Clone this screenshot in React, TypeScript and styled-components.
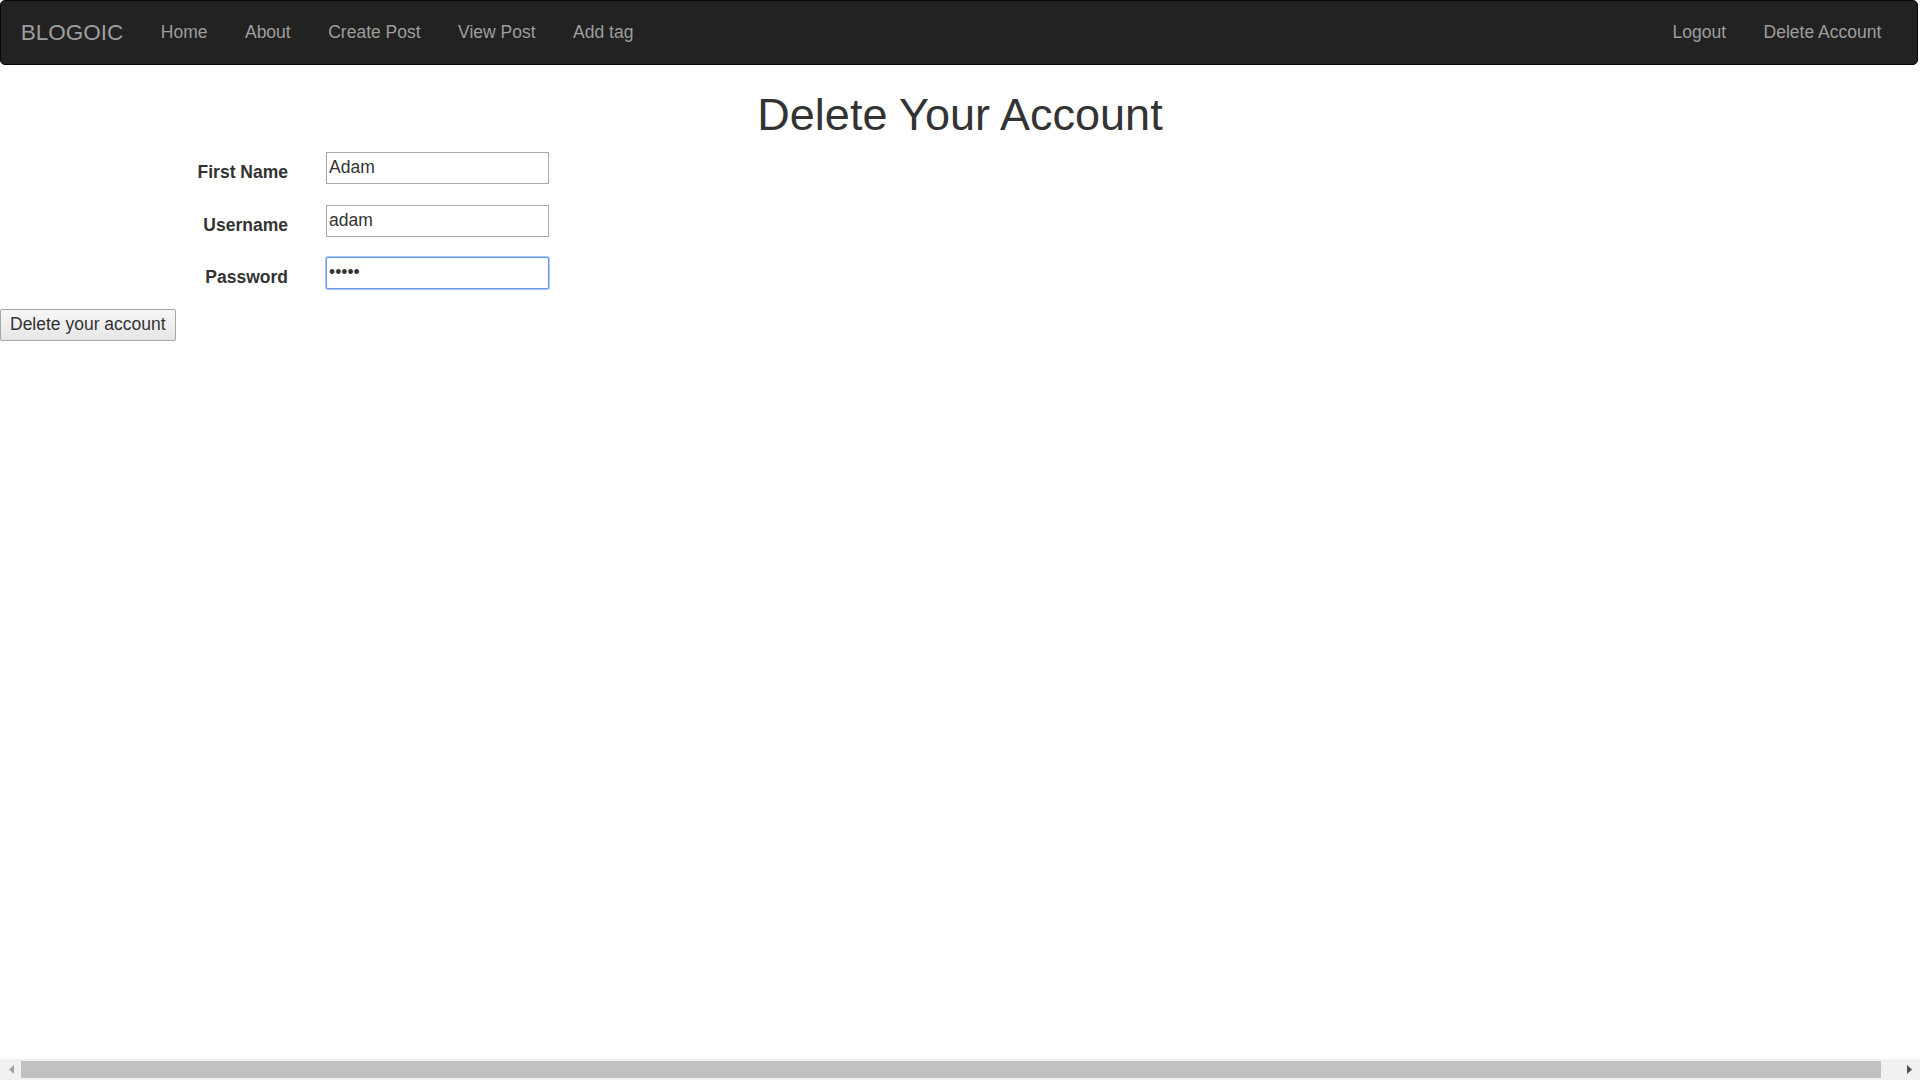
import React from "react";
import styled, { createGlobalStyle } from "styled-components";

const GlobalStyle = createGlobalStyle`
  html, body {
    margin: 0;
    padding: 0;
    height: 100%;
    overflow: hidden;
    background: #ffffff;
  }
  body {
    font-family: "Liberation Sans", Arial, Helvetica, sans-serif;
    font-size: 17.5px;
    line-height: 25px;
    color: #333333;
  }
  * { box-sizing: border-box; }
`;

const Shell = styled.div`
  display: flex;
  flex-direction: column;
  height: 100vh;
`;

const Navbar = styled.nav`
  display: flex;
  justify-content: space-between;
  align-items: flex-start;
  height: 65px;
  margin-right: 2px;
  padding: 0 0 0 1px;
  background: #222222;
  border: 1px solid #080808;
  border-radius: 5px;
`;

const NavGroup = styled.div<{ $right?: boolean }>`
  display: flex;
  align-items: flex-start;
  padding-right: ${(p) => (p.$right ? "17px" : "0")};
`;

const Brand = styled.a`
  display: block;
  padding: 18.75px 18.75px;
  height: 62px;
  font-size: 22.5px;
  line-height: 25px;
  color: #9d9d9d;
  text-decoration: none;
`;

const NavLink = styled.a`
  display: block;
  padding: 18.75px 18.75px;
  font-size: 17.5px;
  line-height: 25px;
  color: #9d9d9d;
  text-decoration: none;
`;

const Main = styled.main`
  flex: 1;
`;

const Title = styled.h1`
  margin: 25px 0 11px;
  text-align: center;
  font-size: 45px;
  font-weight: 500;
  line-height: 49px;
  color: #333333;
`;

const FormGrid = styled.form`
  display: grid;
  grid-template-columns: 288px 223px;
  grid-auto-rows: 32px;
  column-gap: 38px;
  row-gap: 20.5px;
  padding-top: 2px;
`;

const Label = styled.label`
  display: flex;
  justify-content: flex-end;
  padding-top: 10px;
  font-weight: bold;
  font-size: 17.5px;
  line-height: 20px;
  color: #333333;
`;

const Field = styled.input<{ $active?: boolean }>`
  width: 223px;
  height: 32px;
  margin: 0;
  padding: 0 2px 1px;
  font-family: "Liberation Sans", Arial, Helvetica, sans-serif;
  font-size: 17.5px;
  color: #333333;
  background: #ffffff;
  border: 1px solid ${(p) => (p.$active ? "#6a9ae8" : "#a9a9a9")};
  box-shadow: ${(p) => (p.$active ? "0 0 0 1px #a9c6f3" : "none")};
  border-radius: ${(p) => (p.$active ? "2px" : "0")};
  outline: none;
  caret-color: #000;
`;

const SubmitButton = styled.button`
  display: block;
  margin-top: 20px;
  height: 32px;
  padding: 0 9px 1px;
  font-family: "Liberation Sans", Arial, Helvetica, sans-serif;
  font-size: 17.5px;
  color: #333333;
  background: linear-gradient(#f7f7f7, #e6e6e6);
  border: 1px solid #a6a6a6;
  border-radius: 2px;
`;

const Scrollbar = styled.div`
  display: flex;
  align-items: center;
  height: 21px;
  background: #f1f1f1;
`;

const ArrowCell = styled.div`
  display: flex;
  align-items: center;
  justify-content: center;
  width: 21px;
  height: 21px;
  flex: none;
`;

const Thumb = styled.div`
  height: 17px;
  width: 1860px;
  background: #c1c1c1;
`;

const Track = styled.div`
  flex: 1;
  display: flex;
  align-items: center;
`;

const Arrow = ({ dir, color }: { dir: "left" | "right"; color: string }) => (
  <svg width="6" height="9" viewBox="0 0 6 9">
    {dir === "left" ? (
      <polygon points="6,0 6,9 1,4.5" fill={color} />
    ) : (
      <polygon points="0,0 0,9 5,4.5" fill={color} />
    )}
  </svg>
);

export default function App() {
  return (
    <>
      <GlobalStyle />
      <Shell>
        <Navbar>
          <NavGroup>
            <Brand href="#">BLOGOIC</Brand>
            <NavLink href="#">Home</NavLink>
            <NavLink href="#">About</NavLink>
            <NavLink href="#">Create Post</NavLink>
            <NavLink href="#">View Post</NavLink>
            <NavLink href="#">Add tag</NavLink>
          </NavGroup>
          <NavGroup $right>
            <NavLink href="#">Logout</NavLink>
            <NavLink href="#">Delete Account</NavLink>
          </NavGroup>
        </Navbar>
        <Main>
          <Title>Delete Your Account</Title>
          <FormGrid onSubmit={(e) => e.preventDefault()}>
            <Label htmlFor="fn">First Name</Label>
            <Field id="fn" type="text" defaultValue="Adam" />
            <Label htmlFor="un">Username</Label>
            <Field id="un" type="text" defaultValue="adam" />
            <Label htmlFor="pw">Password</Label>
            <Field id="pw" type="password" defaultValue="adamp" $active autoFocus />
          </FormGrid>
          <SubmitButton type="button">Delete your account</SubmitButton>
        </Main>
        <Scrollbar>
          <ArrowCell>
            <Arrow dir="left" color="#a3a3a3" />
          </ArrowCell>
          <Track>
            <Thumb />
          </Track>
          <ArrowCell>
            <Arrow dir="right" color="#505050" />
          </ArrowCell>
        </Scrollbar>
      </Shell>
    </>
  );
}
